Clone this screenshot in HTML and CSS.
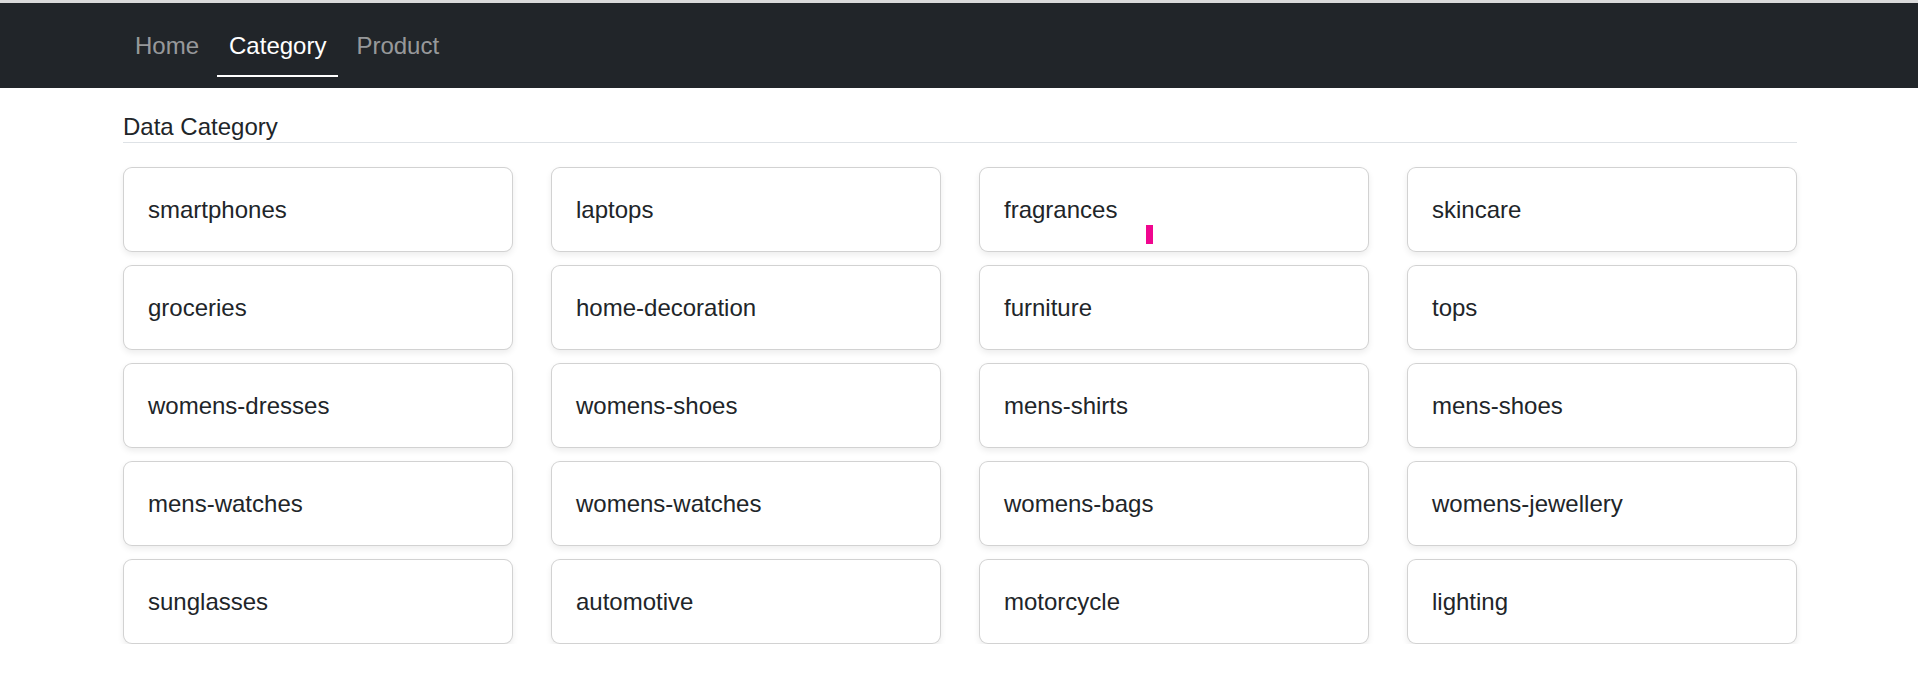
FILE: index.html
```html
<!DOCTYPE html>
<html lang="en">
<head>
<meta charset="utf-8">
<title>Data Category</title>
<link rel="stylesheet" href="styles.css">
</head>
<body>
<div class="topstripe"></div>
<nav class="navbar">
  <div class="container nav-inner">
    <a class="nav-link" href="#">Home</a>
    <a class="nav-link active" href="#">Category</a>
    <a class="nav-link" href="#">Product</a>
  </div>
</nav>
<main class="container">
  <div class="title">Data Category</div>
  <div class="grid">
    <div class="card">smartphones</div>
    <div class="card">laptops</div>
    <div class="card">fragrances<span class="marker"></span></div>
    <div class="card">skincare</div>
    <div class="card">groceries</div>
    <div class="card">home-decoration</div>
    <div class="card">furniture</div>
    <div class="card">tops</div>
    <div class="card">womens-dresses</div>
    <div class="card">womens-shoes</div>
    <div class="card">mens-shirts</div>
    <div class="card">mens-shoes</div>
    <div class="card">mens-watches</div>
    <div class="card">womens-watches</div>
    <div class="card">womens-bags</div>
    <div class="card">womens-jewellery</div>
    <div class="card">sunglasses</div>
    <div class="card">automotive</div>
    <div class="card">motorcycle</div>
    <div class="card">lighting</div>
  </div>
</main>
</body>
</html>
```
FILE: styles.css
```css
* { box-sizing: border-box; }
html, body { margin: 0; padding: 0; }
body {
  background: #ffffff;
  color: #212529;
  font-family: "Liberation Sans", Arial, sans-serif;
  font-size: 24px;
  line-height: 36px;
}
.topstripe {
  height: 3px;
  background: #dadada;
}
.navbar {
  background: #212529;
  padding: 13px 0 11px;
}
.container {
  margin: 0 121px 0 123px;
}
.nav-inner {
  display: flex;
  gap: 6px;
}
.nav-link {
  display: block;
  padding: 12px 12px 11px;
  border-bottom: 2px solid transparent;
  color: rgba(255, 255, 255, 0.55);
  text-decoration: none;
  line-height: 36px;
}
.nav-link.active {
  color: #ffffff;
  border-bottom-color: #ffffff;
}
.title {
  margin-top: 24px;
  line-height: 30px;
  border-bottom: 1px solid #dee2e6;
}
.grid {
  margin-top: 24px;
  display: grid;
  grid-template-columns: repeat(4, 1fr);
  column-gap: 38px;
  row-gap: 13px;
}
.card {
  position: relative;
  padding: 24px;
  line-height: 35px;
  border: 1px solid rgba(0, 0, 0, 0.175);
  border-radius: 9px;
  background: #ffffff;
  box-shadow: 0 3px 6px rgba(0, 0, 0, 0.075);
}
.marker {
  position: absolute;
  left: 166px;
  top: 57px;
  width: 7px;
  height: 19px;
  background: #f0068f;
}
```
